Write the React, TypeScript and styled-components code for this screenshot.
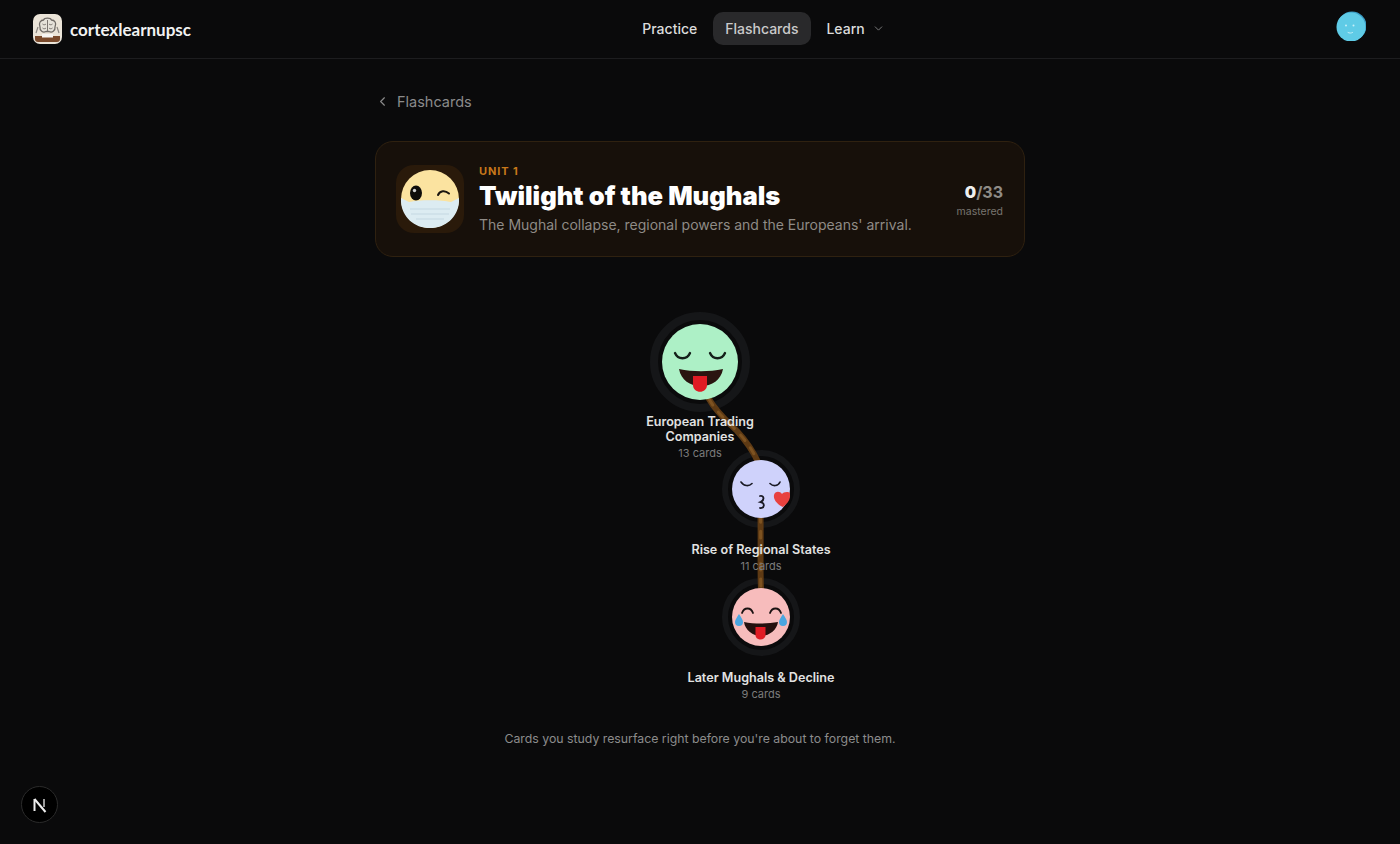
import React from 'react';
import styled, { createGlobalStyle } from 'styled-components';
import { ChevronDown, ChevronLeft } from 'lucide-react';

interface TopicNode {
  id: string;
  title: string;
  cards: number;
  x: number;
  y: number;
  big?: boolean;
  face: React.ReactNode;
}

const GlobalStyle = createGlobalStyle`
  html, body {
    margin: 0;
    background: #0a0a0b;
    color: #fff;
    font-family: Inter, "Liberation Sans", sans-serif;
  }
  * {
    box-sizing: border-box;
  }
`;

const Page = styled.div`
  min-height: 844px;
  background: #0a0a0b;
  position: relative;
  overflow: hidden;
`;

const Header = styled.header`
  height: 59px;
  padding: 0 34px 0 33px;
  display: flex;
  align-items: center;
  justify-content: space-between;
  border-bottom: 1px solid #1d1d1f;
`;

const Brand = styled.div`
  display: flex;
  align-items: center;
  gap: 8px;
`;

const BrandName = styled.span`
  font-family: Lato, Inter, sans-serif;
  font-size: 17px;
  font-weight: 700;
  color: #f2f2f2;
`;

const Nav = styled.nav`
  display: flex;
  align-items: center;
  gap: 3px;
  margin-top: -1px;
`;

const NavItem = styled.a<{ $active?: boolean }>`
  display: flex;
  align-items: center;
  gap: 7px;
  height: 33px;
  padding: 0 12.5px;
  border-radius: 10px;
  font-size: 14px;
  font-weight: 500;
  color: ${(p) => (p.$active ? '#cacaca' : '#dcdcdc')};
  background: ${(p) => (p.$active ? '#29292b' : 'transparent')};
`;

const Avatar = styled.div`
  width: 30px;
  height: 30px;
  margin-top: -6px;
`;

const Main = styled.main`
  width: 650px;
  margin: 0 auto;
`;

const BackLink = styled.a`
  height: 18px;
  margin-top: 33px;
  display: flex;
  align-items: center;
  gap: 7px;
  font-size: 14.5px;
  font-weight: 400;
  color: #8b8b8b;
`;

const UnitCard = styled.section`
  height: 116px;
  margin-top: 31px;
  padding: 0 21px 0 20px;
  display: flex;
  align-items: center;
  gap: 15px;
  background: #17100a;
  border: 1px solid #2f2110;
  border-radius: 18px;
`;

const UnitIcon = styled.div`
  width: 68px;
  height: 68px;
  flex: none;
  border-radius: 18px;
  background: #2a1a0a;
  display: flex;
  align-items: center;
  justify-content: center;
`;

const UnitText = styled.div`
  flex: 1;
  min-width: 0;
  padding-top: 1px;
`;

const UnitLabel = styled.div`
  font-size: 11px;
  line-height: 13px;
  font-weight: 700;
  letter-spacing: 0.9px;
  color: #c9781a;
`;

const UnitTitle = styled.h1`
  margin: 2px 0 0;
  font-size: 25.6px;
  line-height: 31px;
  font-weight: 900;
  color: #fff;
`;

const UnitSub = styled.p`
  margin: 4px 0 0;
  font-size: 14px;
  line-height: 20px;
  color: #8f8b86;
`;

const Progress = styled.div`
  text-align: right;
  margin-top: 3px;
`;

const Score = styled.div`
  font-size: 16px;
  line-height: 21px;
  font-weight: 700;
  color: #8f8c87;

  b {
    color: #efefef;
  }
`;

const ScoreLabel = styled.div`
  margin-top: 2px;
  font-size: 10.5px;
  line-height: 14px;
  color: #78756f;
`;

const Tree = styled.div`
  position: relative;
  height: 426px;
  margin-top: 48px;
`;

const Links = styled.svg`
  position: absolute;
  left: 0;
  top: 0;
  z-index: 1;
`;

const Node = styled.div`
  position: absolute;
  width: 180px;
  margin-left: -90px;
  display: flex;
  flex-direction: column;
  align-items: center;
`;

const Ring = styled.div<{ $big?: boolean }>`
  width: ${(p) => (p.$big ? 100 : 78)}px;
  height: ${(p) => (p.$big ? 100 : 78)}px;
  border-radius: 50%;
  border: ${(p) => (p.$big ? 8 : 6)}px solid #151618;
  background: #0a0a0b;
  display: flex;
  align-items: center;
  justify-content: center;
`;

const Face = styled.div<{ $big?: boolean }>`
  width: ${(p) => (p.$big ? 76 : 58)}px;
  height: ${(p) => (p.$big ? 76 : 58)}px;
  flex: none;
  position: relative;
  z-index: 2;
`;

const NodeTitle = styled.div<{ $big?: boolean }>`
  position: relative;
  z-index: 3;
  margin-top: ${(p) => (p.$big ? 2 : 14)}px;
  width: ${(p) => (p.$big ? 120 : 180)}px;
  text-align: center;
  font-size: 12.6px;
  line-height: 15px;
  font-weight: 600;
  color: #e2e2e2;
`;

const NodeCount = styled.div`
  position: relative;
  z-index: 3;
  margin-top: 2px;
  font-size: 11px;
  line-height: 14px;
  color: #7b7b7b;
`;

const Hint = styled.p`
  margin: 0;
  text-align: center;
  font-size: 12.3px;
  line-height: 16px;
  color: #8c8c8c;
`;

const DevBadge = styled.div`
  position: absolute;
  left: 21px;
  bottom: 21px;
  width: 37px;
  height: 37px;
  border-radius: 50%;
  background: #000;
  border: 1px solid #2b2b2b;
  display: flex;
  align-items: center;
  justify-content: center;
`;

const MaskFace = () => (
  <svg viewBox="0 0 58 58" width="58" height="58">
    <circle cx="29" cy="29" r="29" fill="#fbe3a0" />
    <ellipse cx="15" cy="23" rx="6" ry="7.500" fill="#0e0c0a" />
    <circle cx="13.500" cy="20.500" r="1.700" fill="#cfcfcf" />
    <path d="M37 25c2-4.500 7-5 11-1.500" fill="none" stroke="#1a1510" strokeWidth="2" strokeLinecap="round" />
    <path d="M0 28 8 32c10-2.500 32-2.500 42 0l8-4c1 17-12 30-29 30S-1 45 0 28Z" fill="#dcecf2" />
    <path d="M9 39h40M10 44h38M15 49h28" stroke="#c4d8e2" strokeWidth="1" fill="none" />
  </svg>
);

const TongueFace = () => (
  <svg viewBox="0 0 76 76" width="76" height="76">
    <circle cx="38" cy="38" r="38" fill="#adf0c6" />
    <path d="M13 29c3 7 12 7 15 0M48 29c3 7 12 7 15 0" fill="none" stroke="#14201a" strokeWidth="2.400" strokeLinecap="round" />
    <path d="M17 45c14 3 30 3 44 0-2 11-11 17-22 17s-20-6-22-17Z" fill="#2a1410" />
    <path d="M31 52h14v9c0 9-14 9-14 0Z" fill="#e01b24" />
  </svg>
);

const KissFace = () => (
  <svg viewBox="0 0 58 58" width="58" height="58">
    <circle cx="29" cy="29" r="29" fill="#cfd2fb" />
    <path d="M9 22c3 4.500 8 4.500 11 1.500M38 23.500c3 3 8 3 10-1.500" fill="none" stroke="#1a1a24" strokeWidth="1.600" strokeLinecap="round" />
    <path d="M28 36c4-1 5 4 .5 6c5 1 4 6.500-.5 6" fill="none" stroke="#1a1a24" strokeWidth="1.800" strokeLinecap="round" />
    <path d="M51 47c-5-2-10-7-9-12 1-4 6-4 8-1 1-2 6-3 8-1 1 6-2 10-7 14Z" fill="#e8413f" />
  </svg>
);

const LaughFace = () => (
  <svg viewBox="0 0 58 58" width="58" height="58">
    <circle cx="29" cy="29" r="29" fill="#f7bcbc" />
    <path d="M10 25c2-6 9-6 11 0M38 25c2-6 9-6 11 0" fill="none" stroke="#1a1212" strokeWidth="1.800" strokeLinecap="round" />
    <path d="M12 34c10 2 24 2 34 0-1 8-9 14-17 14s-16-6-17-14Z" fill="#24100e" />
    <path d="M23.500 39h10v8c0 6-10 6-10 0Z" fill="#e01b24" />
    <path d="M7 26c2 3 4 6 4 8a4 4 0 0 1-8 0c0-2 2-5 4-8ZM51 26c2 3 4 6 4 8a4 4 0 0 1-8 0c0-2 2-5 4-8Z" fill="#4aa6e0" />
  </svg>
);

const topics: TopicNode[] = [
  { id: 'trading', title: 'European Trading Companies', cards: 13, x: 325, y: 7, big: true, face: <TongueFace /> },
  { id: 'regional', title: 'Rise of Regional States', cards: 11, x: 386, y: 145, face: <KissFace /> },
  { id: 'decline', title: 'Later Mughals & Decline', cards: 9, x: 386, y: 273, face: <LaughFace /> },
];

export default function App() {
  return (
    <Page>
      <GlobalStyle />
      <Header>
        <Brand>
          <svg viewBox="0 0 29 30" width="29" height="30">
            <rect width="29" height="30" rx="7" fill="#ebe4d8" />
            <path d="M3 19 5 13M26 19l-2-6" stroke="#8a8580" strokeWidth="1.200" />
            <path d="M7 13c-2-4 1-7 3.500-7 1-2.500 7-2.500 8 0 3 0 5.500 3 3.500 7 .5 4-3 6-6 4.500h-3C10 19 6.500 17 7 13Z" fill="#e6e2da" stroke="#6f6a66" strokeWidth="1.300" />
            <path d="M14.500 6v12M9.500 10c1 1 2.500 1 3.500 0M16 10c1 1 2.500 1 3.500 0M9.500 14c1 1 2.500 1 3.500 0M16 14c1 1 2.500 1 3.500 0" stroke="#6f6a66" strokeWidth="0.900" fill="none" />
            <path d="M2 22h25v3c0 2-1 3-3 3H5c-2 0-3-1-3-3Z" fill="#7a4a2c" />
            <rect x="9" y="20" width="11" height="3.500" fill="#f7f5f2" />
          </svg>
          <BrandName>cortexlearnupsc</BrandName>
        </Brand>
        <Nav>
          <NavItem>Practice</NavItem>
          <NavItem $active>Flashcards</NavItem>
          <NavItem>
            Learn
            <ChevronDown size={13} color="#8a8a8a" strokeWidth={1.6} />
          </NavItem>
        </Nav>
        <Avatar>
          <svg viewBox="0 0 30 30" width="30" height="30">
            <circle cx="16" cy="15" r="14.500" fill="#3a9cc4" />
            <circle cx="15" cy="16" r="14.500" fill="#5fcbe6" />
            <circle cx="10" cy="14.500" r="1" fill="#c6eef8" />
            <circle cx="17.500" cy="14.500" r="1" fill="#c6eef8" />
            <path d="M12 21.500c1.500 .8 3 .8 4.500 0" stroke="#c6eef8" strokeWidth="1" fill="none" strokeLinecap="round" />
          </svg>
        </Avatar>
      </Header>

      <Main>
        <BackLink>
          <ChevronLeft size={15} color="#8b8b8b" strokeWidth={1.8} />
          Flashcards
        </BackLink>

        <UnitCard>
          <UnitIcon>
            <MaskFace />
          </UnitIcon>
          <UnitText>
            <UnitLabel>UNIT 1</UnitLabel>
            <UnitTitle>Twilight of the Mughals</UnitTitle>
            <UnitSub>The Mughal collapse, regional powers and the Europeans' arrival.</UnitSub>
          </UnitText>
          <Progress>
            <Score>
              <b>0</b>/33
            </Score>
            <ScoreLabel>mastered</ScoreLabel>
          </Progress>
        </UnitCard>

        <Tree>
          <Links width="650" height="426" fill="none" strokeLinecap="round">
            <path d="M334 94C342 108 352 116 362 126C372 137 378 146 383 157" stroke="#5e3a14" strokeWidth="6" />
            <path d="M334 94C342 108 352 116 362 126C372 137 378 146 383 157" stroke="#7d5220" strokeWidth="3" strokeDasharray="7 9" />
            <path d="M385.500 210C386 240 385 262 386 284" stroke="#5e3a14" strokeWidth="6" />
            <path d="M385.500 210C386 240 385 262 386 284" stroke="#7d5220" strokeWidth="3" strokeDasharray="7 9" />
          </Links>
          {topics.map((topic) => (
            <Node key={topic.id} style={{ left: topic.x, top: topic.y }}>
              <Ring $big={topic.big}>
                <Face $big={topic.big}>{topic.face}</Face>
              </Ring>
              <NodeTitle $big={topic.big}>{topic.title}</NodeTitle>
              <NodeCount>{topic.cards} cards</NodeCount>
            </Node>
          ))}
        </Tree>

        <Hint>Cards you study resurface right before you're about to forget them.</Hint>
      </Main>

      <DevBadge>
        <svg viewBox="0 0 18 18" width="18" height="18">
          <path d="M3.500 3v12" stroke="#eee" strokeWidth="2" />
          <path d="M3.500 3 14.500 16" stroke="#eee" strokeWidth="2" />
          <path d="M13 3v8" stroke="#aaa" strokeWidth="1.800" />
        </svg>
      </DevBadge>
    </Page>
  );
}
